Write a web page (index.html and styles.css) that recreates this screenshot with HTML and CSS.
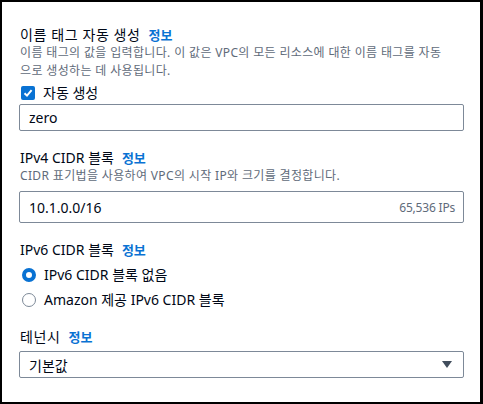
FILE: index.html
```html
<!DOCTYPE html>
<html lang="ko">
<head>
    <meta charset="UTF-8">
    <meta name="viewport" content="width=device-width, initial-scale=1.0">
    <title>VPC 설정</title>
    <link rel="stylesheet" href="styles.css">
</head>
<body>
    <div class="frame">
        <div class="field field-name">
            <div class="label"><span class="wide">이름 태그 자동 생성</span> <a class="info" href="#">정보</a></div>
            <p class="desc">이름 태그의 값을 입력합니다. 이 값은 VPC의 모든 리소스에 대한 이름 태그를 자동<br>으로 생성하는 데 사용됩니다.</p>
            <label class="check">
                <span class="checkbox">
                    <svg width="10" height="10" viewBox="0 0 10 10"><path d="M1.5 5.2 L4 7.6 L8.6 2.2" fill="none" stroke="#fff" stroke-width="2"/></svg>
                </span>
                자동 생성
            </label>
            <div class="input">zero</div>
        </div>

        <div class="field field-ipv4">
            <div class="label">IPv4 CIDR 블록 <a class="info" href="#">정보</a></div>
            <p class="desc one">CIDR 표기법을 사용하여 VPC의 시작 IP와 크기를 결정합니다.</p>
            <div class="input tall">
                <span>10.1.0.0/16</span>
                <span class="count">65,536 IPs</span>
            </div>
        </div>

        <div class="field field-ipv6">
            <div class="label">IPv6 CIDR 블록 <a class="info" href="#">정보</a></div>
            <div class="radios">
                <label class="radio"><span class="dot on"></span>IPv6 CIDR 블록 없음</label>
                <label class="radio"><span class="dot"></span>Amazon 제공 IPv6 CIDR 블록</label>
            </div>
        </div>

        <div class="field field-tenancy">
            <div class="label"><span class="wide">테넌시</span> <a class="info" href="#">정보</a></div>
            <div class="input select">
                <span>기본값</span>
                <svg class="caret" width="10" height="8" viewBox="0 0 10 8"><path d="M0 0 H10 L5 7 Z" fill="#414d5c"/></svg>
            </div>
        </div>
    </div>
</body>
</html>
```

FILE: styles.css
```css
* {
    box-sizing: border-box;
}
body {
    margin: 0;
    font-family: "Noto Sans", "Noto Sans CJK KR", sans-serif;
    color: #000716;
    background-color: #fff;
}
.frame {
    width: 483px;
    height: 404px;
    border: 2px solid #000;
    border-right-width: 3px;
    padding: 24px 16px 0 17px;
}
.field {
    display: flex;
    flex-direction: column;
}
.field-ipv4 {
    margin-top: 18px;
}
.field-ipv6 {
    margin-top: 18px;
}
.field-tenancy {
    margin-top: 18px;
}
.label {
    display: flex;
    align-items: baseline;
    gap: 8px;
    height: 18px;
    font-size: 14px;
    line-height: 18px;
    padding-left: 1px;
}
.wide {
    letter-spacing: 0.6px;
}
.info {
    color: #0972d3;
    font-weight: bold;
    font-size: 13px;
    line-height: 18px;
    text-decoration: none;
}
.desc {
    margin: 0;
    font-size: 12px;
    line-height: 18px;
    color: #5f6b7a;
    padding-left: 1px;
    letter-spacing: 0.35px;
    white-space: nowrap;
}
.desc.one {
    margin-bottom: 4px;
}
.check {
    display: flex;
    align-items: center;
    gap: 8px;
    height: 20px;
    font-size: 14px;
    line-height: 20px;
    margin-top: 3px;
    padding-left: 2px;
}
.checkbox {
    width: 14px;
    height: 14px;
    border-radius: 2px;
    background-color: #0972d3;
    display: flex;
    align-items: center;
    justify-content: center;
}
.input {
    display: flex;
    align-items: center;
    justify-content: space-between;
    height: 27px;
    border: 1px solid #7d8998;
    border-radius: 2px;
    padding: 0 8px 0 9px;
    font-size: 14px;
    margin-top: 1px;
}
.input.tall {
    height: 32px;
    margin-top: 2px;
}
.count {
    color: #5f6b7a;
    font-size: 12px;
    letter-spacing: -0.2px;
}
.radios {
    display: flex;
    flex-direction: column;
    gap: 5px;
    margin-top: 6px;
}
.radio {
    display: flex;
    align-items: center;
    gap: 8px;
    height: 20px;
    font-size: 14px;
    line-height: 20px;
    padding-left: 3px;
}
.dot {
    width: 14px;
    height: 14px;
    border-radius: 50%;
    border: 1px solid #7d8998;
}
.dot.on {
    border: 4px solid #0972d3;
}
.select {
    margin-top: 5px;
}
.caret {
    margin-right: 3px;
}
```
